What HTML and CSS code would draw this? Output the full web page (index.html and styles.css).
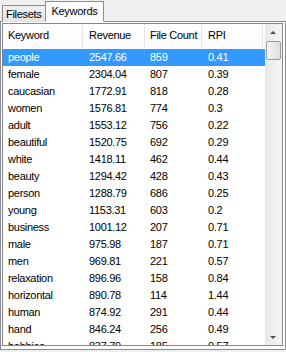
FILE: index.html
```html
<!DOCTYPE html>
<html lang="en">
<head>
  <meta charset="UTF-8" />
  <title>Keywords</title>
  <link rel="stylesheet" href="styles.css">
</head>
<body>
  <div class="tabs">
    <div class="tab">Filesets</div>
    <div class="tab active">Keywords</div>
  </div>

  <div class="panel">
    <div class="listview">
      <div class="list">
        <div class="row head">
          <div class="cell c1">Keyword</div>
          <div class="cell c2">Revenue</div>
          <div class="cell c3">File Count</div>
          <div class="cell c4">RPI</div>
        </div>
        <div class="rows">
          <div class="row selected"><div class="cell c1">people</div><div class="cell c2">2547.66</div><div class="cell c3">859</div><div class="cell c4">0.41</div></div>
          <div class="row"><div class="cell c1">female</div><div class="cell c2">2304.04</div><div class="cell c3">807</div><div class="cell c4">0.39</div></div>
          <div class="row"><div class="cell c1">caucasian</div><div class="cell c2">1772.91</div><div class="cell c3">818</div><div class="cell c4">0.28</div></div>
          <div class="row"><div class="cell c1">women</div><div class="cell c2">1576.81</div><div class="cell c3">774</div><div class="cell c4">0.3</div></div>
          <div class="row"><div class="cell c1">adult</div><div class="cell c2">1553.12</div><div class="cell c3">756</div><div class="cell c4">0.22</div></div>
          <div class="row"><div class="cell c1">beautiful</div><div class="cell c2">1520.75</div><div class="cell c3">692</div><div class="cell c4">0.29</div></div>
          <div class="row"><div class="cell c1">white</div><div class="cell c2">1418.11</div><div class="cell c3">462</div><div class="cell c4">0.44</div></div>
          <div class="row"><div class="cell c1">beauty</div><div class="cell c2">1294.42</div><div class="cell c3">428</div><div class="cell c4">0.43</div></div>
          <div class="row"><div class="cell c1">person</div><div class="cell c2">1288.79</div><div class="cell c3">686</div><div class="cell c4">0.25</div></div>
          <div class="row"><div class="cell c1">young</div><div class="cell c2">1153.31</div><div class="cell c3">603</div><div class="cell c4">0.2</div></div>
          <div class="row"><div class="cell c1">business</div><div class="cell c2">1001.12</div><div class="cell c3">207</div><div class="cell c4">0.71</div></div>
          <div class="row"><div class="cell c1">male</div><div class="cell c2">975.98</div><div class="cell c3">187</div><div class="cell c4">0.71</div></div>
          <div class="row"><div class="cell c1">men</div><div class="cell c2">969.81</div><div class="cell c3">221</div><div class="cell c4">0.57</div></div>
          <div class="row"><div class="cell c1">relaxation</div><div class="cell c2">896.96</div><div class="cell c3">158</div><div class="cell c4">0.84</div></div>
          <div class="row"><div class="cell c1">horizontal</div><div class="cell c2">890.78</div><div class="cell c3">114</div><div class="cell c4">1.44</div></div>
          <div class="row"><div class="cell c1">human</div><div class="cell c2">874.92</div><div class="cell c3">291</div><div class="cell c4">0.44</div></div>
          <div class="row"><div class="cell c1">hand</div><div class="cell c2">846.24</div><div class="cell c3">256</div><div class="cell c4">0.49</div></div>
          <div class="row"><div class="cell c1">hobbies</div><div class="cell c2">837.79</div><div class="cell c3">185</div><div class="cell c4">0.57</div></div>
        </div>
      </div>
      <div class="scrollbar">
        <div class="arrow up"></div>
        <div class="thumb"></div>
        <div class="track"></div>
        <div class="arrow down"></div>
      </div>
    </div>
  </div>
</body>
</html>
```

FILE: styles.css
```css
body {
  margin: 0;
  width: 286px;
  height: 352px;
  overflow: hidden;
  background: #f0f0f0;
  font-family: "Liberation Sans", Arial, sans-serif;
  font-size: 11px;
  letter-spacing: -0.3px;
  color: #000;
}

.tabs {
  display: flex;
  align-items: flex-end;
  height: 22px;
  padding-left: 2px;
  box-sizing: border-box;
  border-bottom: 1px solid #898c95;
}

.tab {
  height: 16px;
  line-height: 17px;
  padding: 0 3px;
  margin-bottom: -1px;
  background: linear-gradient(#f2f2f2, #e3e3e3);
  border: 1px solid #898c95;
  border-bottom: none;
}

.tab.active {
  height: 21px;
  line-height: 19px;
  padding: 0 6px;
  margin-left: -1px;
  background: #fcfcfc;
  border-bottom: 1px solid #fcfcfc;
  box-sizing: border-box;
}

.panel {
  background: #fff;
  border: 1px solid #898c95;
  border-top: none;
  height: 326px;
  padding: 1px 2px 0 1px;
}

.listview {
  display: flex;
  height: 321px;
  border: 1px solid #828790;
  overflow: hidden;
}

.list {
  flex: 1;
  overflow: hidden;
}

.row {
  display: flex;
  height: 17px;
  line-height: 17px;
}

.row.head {
  height: 24px;
  line-height: 22px;
  margin-bottom: 1px;
  background: linear-gradient(#ffffff, #fbfbfb);
}

.head .cell {
  border-right: 1px solid #e5e5e5;
}

.row.selected {
  background: #3399ff;
  color: #fff;
}

.cell {
  box-sizing: border-box;
  padding-left: 5px;
  white-space: nowrap;
  overflow: hidden;
}

.c1 { width: 80px; }
.c2 { width: 62px; padding-left: 6px; }
.c3 { width: 57px; padding-left: 5px; }
.c4 { width: 61px; padding-left: 6px; }

.scrollbar {
  width: 17px;
  display: flex;
  flex-direction: column;
  background: linear-gradient(to right, #e9e9e9, #f5f5f5);
}

.arrow {
  height: 17px;
  position: relative;
}

.arrow::after {
  content: "";
  position: absolute;
  left: 5px;
  border-left: 3px solid transparent;
  border-right: 3px solid transparent;
}

.arrow.up::after {
  top: 7px;
  border-bottom: 3px solid #4d4d4d;
}

.arrow.down::after {
  top: 8px;
  border-top: 3px solid #4d4d4d;
}

.thumb {
  height: 17px;
  margin: 0 1px;
  border: 1px solid #9b9b9b;
  border-radius: 2px;
  background: linear-gradient(to right, #f5f5f5, #dedede);
}

.track {
  flex: 1;
}
```
